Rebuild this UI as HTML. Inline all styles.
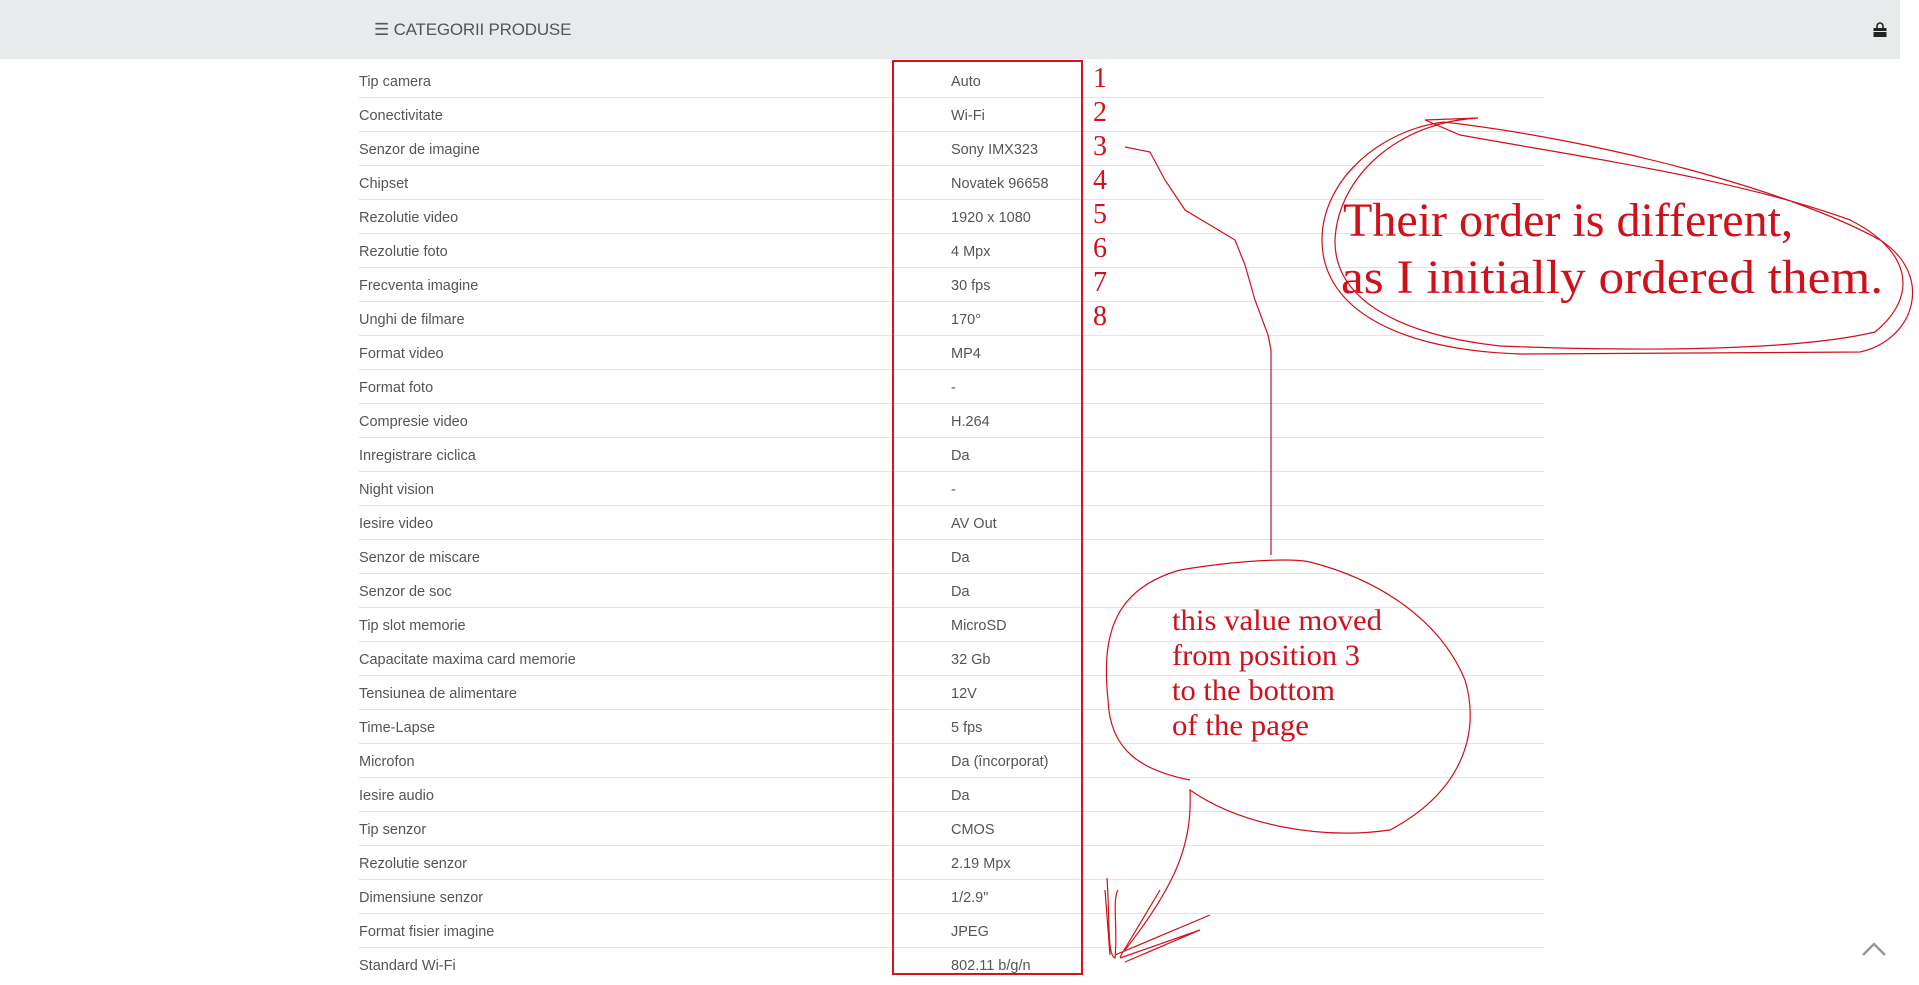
<!DOCTYPE html>
<html><head><meta charset="utf-8"><style>
html,body{margin:0;padding:0;width:1919px;height:976px;overflow:hidden;background:#fff;font-family:"Liberation Sans",sans-serif}
.hdr{position:absolute;left:0;top:0;width:1900px;height:59px;background:#e8ebec}
.cat{position:absolute;left:374px;top:20px;font-size:17px;color:#555;letter-spacing:-0.2px}
.row{position:absolute;left:359px;width:1185px;height:34px;border-bottom:1px solid #e3e3e3;font-size:14.5px;color:#555;line-height:38px}
.row span{position:absolute;left:592px;top:0}
</style></head><body>
<div class="hdr"></div>
<div class="cat">&#9776; CATEGORII PRODUSE</div>
<svg style="position:absolute;left:1872px;top:22px" width="16" height="16" viewBox="0 0 16 16"><path d="M5 6V4a3 3 0 0 1 6 0v2" fill="none" stroke="#222" stroke-width="1.6"/><rect x="1.5" y="6" width="13" height="9" fill="#222"/><rect x="1.5" y="9" width="13" height="1" fill="#e8ebec"/></svg>
<div class="row" style="top:63px">Tip camera<span>Auto</span></div>
<div class="row" style="top:97px">Conectivitate<span>Wi-Fi</span></div>
<div class="row" style="top:131px">Senzor de imagine<span>Sony IMX323</span></div>
<div class="row" style="top:165px">Chipset<span>Novatek 96658</span></div>
<div class="row" style="top:199px">Rezolutie video<span>1920 x 1080</span></div>
<div class="row" style="top:233px">Rezolutie foto<span>4 Mpx</span></div>
<div class="row" style="top:267px">Frecventa imagine<span>30 fps</span></div>
<div class="row" style="top:301px">Unghi de filmare<span>170°</span></div>
<div class="row" style="top:335px">Format video<span>MP4</span></div>
<div class="row" style="top:369px">Format foto<span>-</span></div>
<div class="row" style="top:403px">Compresie video<span>H.264</span></div>
<div class="row" style="top:437px">Inregistrare ciclica<span>Da</span></div>
<div class="row" style="top:471px">Night vision<span>-</span></div>
<div class="row" style="top:505px">Iesire video<span>AV Out</span></div>
<div class="row" style="top:539px">Senzor de miscare<span>Da</span></div>
<div class="row" style="top:573px">Senzor de soc<span>Da</span></div>
<div class="row" style="top:607px">Tip slot memorie<span>MicroSD</span></div>
<div class="row" style="top:641px">Capacitate maxima card memorie<span>32 Gb</span></div>
<div class="row" style="top:675px">Tensiunea de alimentare<span>12V</span></div>
<div class="row" style="top:709px">Time-Lapse<span>5 fps</span></div>
<div class="row" style="top:743px">Microfon<span>Da (încorporat)</span></div>
<div class="row" style="top:777px">Iesire audio<span>Da</span></div>
<div class="row" style="top:811px">Tip senzor<span>CMOS</span></div>
<div class="row" style="top:845px">Rezolutie senzor<span>2.19 Mpx</span></div>
<div class="row" style="top:879px">Dimensiune senzor<span>1/2.9"</span></div>
<div class="row" style="top:913px">Format fisier imagine<span>JPEG</span></div>
<div class="row" style="top:947px;border-bottom:none">Standard Wi-Fi<span>802.11 b/g/n</span></div>

<svg style="position:absolute;left:0;top:0" width="1919" height="976" viewBox="0 0 1919 976">
<rect x="893" y="61" width="189" height="913" fill="none" stroke="#d8131b" stroke-width="2"/>
<g font-family="Liberation Serif,serif" fill="#d0101a" font-size="28">
<text x="1093" y="87">1</text><text x="1093" y="121">2</text><text x="1093" y="155">3</text><text x="1093" y="189">4</text>
<text x="1093" y="223">5</text><text x="1093" y="257">6</text><text x="1093" y="291">7</text><text x="1093" y="325">8</text>
<text x="1343" y="236" font-size="48" textLength="450" lengthAdjust="spacingAndGlyphs">Their order is different,</text>
<text x="1341" y="293" font-size="48" textLength="542" lengthAdjust="spacingAndGlyphs">as I initially ordered them.</text>
<text x="1172" y="630" font-size="30" textLength="210" lengthAdjust="spacingAndGlyphs">this value moved</text>
<text x="1172" y="665" font-size="30" textLength="188" lengthAdjust="spacingAndGlyphs">from position 3</text>
<text x="1172" y="700" font-size="30" textLength="163" lengthAdjust="spacingAndGlyphs">to the bottom</text>
<text x="1172" y="735" font-size="30" textLength="137" lengthAdjust="spacingAndGlyphs">of the page</text>
</g>
<g fill="none" stroke="#d0101a" stroke-width="1.2">
<path d="M1125 147 L1150 152 L1165 180 L1185 210 L1215 228 L1235 240 L1245 265 L1255 300 L1268 335 L1271 350 L1271 555"/>
<path d="M1444 122 C1600 140 1790 190 1880 240 C1935 275 1915 340 1860 352 L1520 354 C1400 350 1322 310 1322 240 C1322 180 1380 130 1444 122 Z"/>
<path d="M1478 118 C1400 122 1338 175 1335 240 C1334 300 1400 335 1500 346 C1650 352 1800 350 1875 332 C1920 295 1910 250 1850 220 C1740 180 1600 160 1460 135 L1425 120 L1478 118"/>
<path d="M1190 780 C1140 770 1110 750 1108 700 C1102 640 1110 590 1180 570 C1240 560 1290 558 1310 562 C1380 580 1440 620 1465 680 C1480 730 1465 790 1390 830 C1320 840 1240 825 1190 790 C1192 840 1180 880 1125 950"/>
<path d="M1107 878 C1110 920 1107 955 1115 958 C1118 930 1112 900 1118 890 M1120 957 L1160 890 M1115 955 L1210 915 M1120 958 L1200 930 L1125 962 M1105 890 L1110 955"/>
</g>
<path d="M1863 955 L1874 944 L1885 955" fill="none" stroke="#999" stroke-width="2.5"/>
</svg>
</body></html>
